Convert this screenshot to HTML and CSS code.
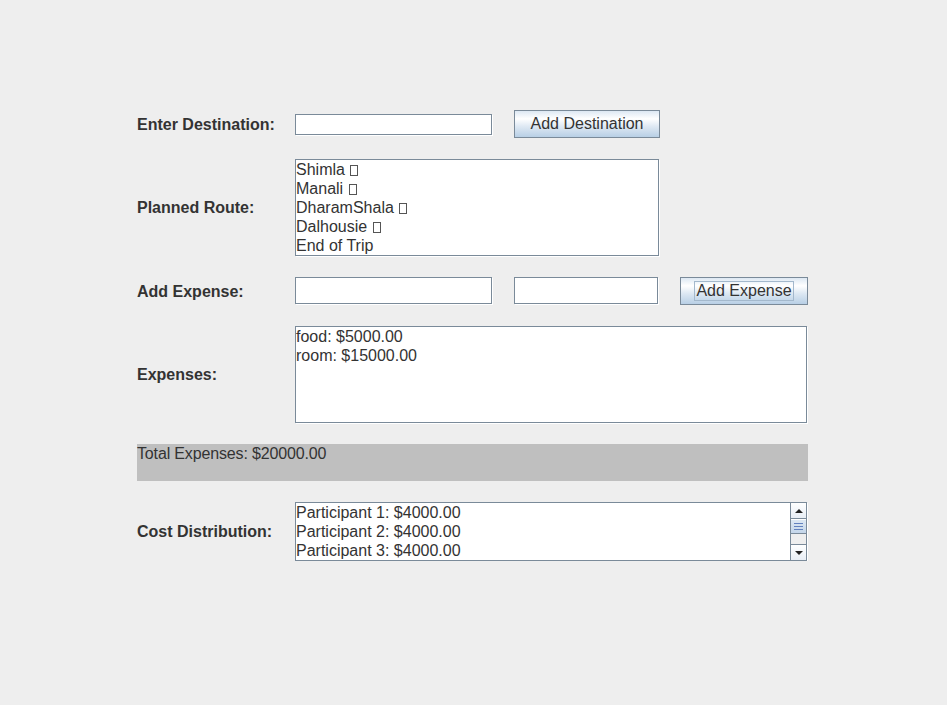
FILE: index.html
```html
<!DOCTYPE html>
<html>
<head>
<meta charset="utf-8">
<title>Trip Planner</title>
<link rel="stylesheet" href="styles.css">
</head>
<body>
<div class="form">
  <div class="lbl">Enter Destination:</div>
  <div class="field short c2"></div>
  <button class="btn btn-dest c3">Add Destination</button>

  <div class="lbl">Planned Route:</div>
  <div class="box route">
    <div class="line">Shimla <span class="tofu"></span></div>
    <div class="line">Manali <span class="tofu"></span></div>
    <div class="line">DharamShala <span class="tofu"></span></div>
    <div class="line">Dalhousie <span class="tofu"></span></div>
    <div class="line">End of Trip</div>
  </div>

  <div class="lbl">Add Expense:</div>
  <div class="field tall c2"></div>
  <div class="field tall narrow c3"></div>
  <button class="btn btn-exp c4"><span class="focus">Add Expense</span></button>

  <div class="lbl">Expenses:</div>
  <div class="box expenses">
    <div class="line">food: $5000.00</div>
    <div class="line">room: $15000.00</div>
  </div>

  <div class="total">Total Expenses: $20000.00</div>

  <div class="lbl">Cost Distribution:</div>
  <div class="box dist">
    <div class="dist-lines">
      <div class="line">Participant 1: $4000.00</div>
      <div class="line">Participant 2: $4000.00</div>
      <div class="line">Participant 3: $4000.00</div>
    </div>
    <div class="sbar">
      <div class="sbtn"><span class="tri up"></span></div>
      <div class="thumb"><span></span><span></span><span></span></div>
      <div class="track"></div>
      <div class="sbtn"><span class="tri down"></span></div>
    </div>
  </div>
</div>
</body>
</html>
```

FILE: styles.css
```css
html, body {
  margin: 0;
  padding: 0;
  background: #eeeeee;
}
body {
  font-family: "Liberation Sans", Arial, sans-serif;
  font-size: 16px;
  color: #333333;
}
.form {
  display: grid;
  grid-template-columns: 137px 198px 145px 128px;
  column-gap: 21px;
  row-gap: 21px;
  align-items: center;
  margin: 110px 0 0 137px;
  width: 671px;
}
.c2 { grid-column: 2; }
.c3 { grid-column: 3; }
.c4 { grid-column: 4; }
.lbl {
  grid-column: 1;
  font-weight: bold;
  white-space: nowrap;
  line-height: 19px;
}
.field {
  box-sizing: border-box;
  background: #fff;
  border: 1px solid #7a8a99;
  box-shadow: 1px 1px 0 #fff;
  width: 197px;
}
.field.short { height: 21px; }
.field.tall { height: 27px; align-self: start; }
.field.narrow { width: 144px; }
.btn {
  box-sizing: border-box;
  height: 28px;
  padding: 0;
  font-family: "Liberation Sans", Arial, sans-serif;
  font-size: 16px;
  color: #333;
  border: 1px solid #7a8a99;
  background: linear-gradient(#dde8f3 0%, #ffffff 30%, #dde8f3 60%, #b8cfe5 100%);
  display: flex;
  align-items: center;
  justify-content: center;
}
.btn-dest { width: 146px; }
.btn-exp { width: 128px; }
.focus {
  border: 1px solid #a3b8cc;
  line-height: 18px;
  padding: 0 1px;
}
.box {
  box-sizing: border-box;
  background: #fff;
  border: 1px solid #7a8a99;
  box-shadow: 1px 1px 0 #fff;
  white-space: nowrap;
}
.line {
  height: 19px;
  line-height: 19px;
}
.route {
  grid-column: 2 / 4;
  height: 97px;
  width: 364px;
}
.expenses {
  grid-column: 2 / 5;
  height: 97px;
  width: 512px;
}
.dist {
  grid-column: 2 / 5;
  height: 59px;
  width: 512px;
  display: flex;
}
.dist-lines { flex: 1; }
.tofu {
  display: inline-block;
  box-sizing: border-box;
  width: 8px;
  height: 11px;
  border: 1px solid #555;
  vertical-align: -1px;
  margin-left: 1px;
}
.total {
  grid-column: 1 / 5;
  height: 37px;
  background: #bfbfbf;
  line-height: 19px;
  letter-spacing: -0.15px;
}
.sbar {
  width: 15px;
  display: flex;
  flex-direction: column;
  border-left: 1px solid #7a8a99;
  background: #eeeeee;
}
.sbtn {
  box-sizing: border-box;
  height: 16px;
  background: linear-gradient(#ffffff, #e8eef5);
  border-bottom: 1px solid #7a8a99;
  display: flex;
  align-items: center;
  justify-content: center;
}
.sbtn:last-child {
  border-bottom: 0;
  border-top: 1px solid #7a8a99;
}
.tri {
  width: 0;
  height: 0;
  border-left: 4px solid transparent;
  border-right: 4px solid transparent;
}
.tri.up { border-bottom: 4px solid #222; }
.tri.down { border-top: 4px solid #222; }
.thumb {
  box-sizing: border-box;
  height: 15px;
  background: linear-gradient(#dde8f3, #c4d6ea);
  border-bottom: 1px solid #7a8a99;
  border-top: 1px solid #ffffff;
  display: flex;
  flex-direction: column;
  align-items: center;
  justify-content: center;
  gap: 2px;
}
.thumb span {
  display: block;
  width: 9px;
  height: 1px;
  background: #6382bf;
}
.track {
  flex: 1;
  background: #eeeeee;
}
```
